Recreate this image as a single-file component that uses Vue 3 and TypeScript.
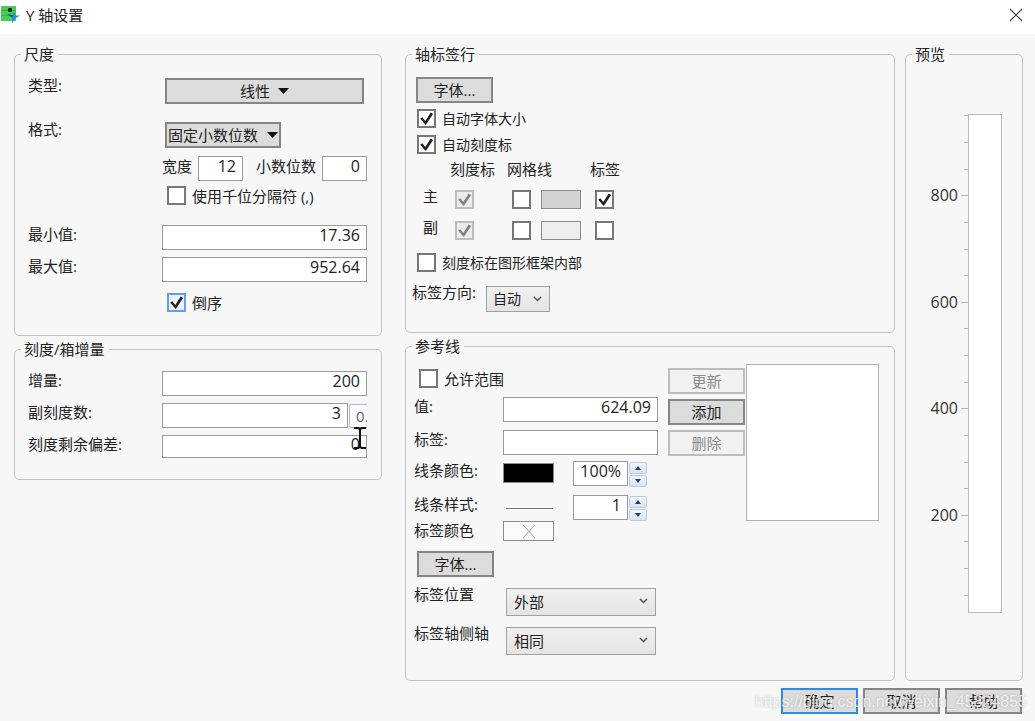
<script setup lang="ts">
import { computed, reactive } from 'vue'

const form = reactive({
  width: '12',
  decimals: '0',
  thousands: false,
  min: '17.36',
  max: '952.64',
  reversed: true,
  increment: '200',
  minorCount: '3',
  minorOffset: '0.',
  tickDeviation: '0',
  autoFont: true,
  autoTicks: true,
  insideTicks: false,
  direction: '自动',
  allowRange: false,
  refValue: '624.09',
  refLabel: '',
  opacity: '100%',
  lineWidth: '1',
  labelPosition: '外部',
  labelSide: '相同',
})

const tickRows = reactive([
  { name: '主', ticks: true, grid: false, swatch: 'swatch-major', label: true },
  { name: '副', ticks: true, grid: false, swatch: 'swatch-minor', label: false },
])

const barTop = 2
const barHeight = 498

const axisTicks = computed(() => {
  const min = Number(form.min)
  const max = Number(form.max)
  const list: { value: number; y: number; major: boolean }[] = []
  for (let value = 50; value < max; value += 50) {
    const y = Math.round(barTop + ((max - value) / (max - min)) * barHeight)
    list.push({ value, y, major: value % 200 === 0 })
  }
  return list
})
</script>

<template>
  <div class="dialog">
    <header class="titlebar">
      <svg class="app-icon" width="20" height="20" viewBox="0 0 20 20" aria-hidden="true">
        <rect x="1" y="1" width="15" height="15" fill="#45cf52" />
        <path d="M1 5.5h15M1 10.5h15" stroke="#35b548" stroke-width="1" />
        <circle cx="10" cy="5" r="2.200" fill="#10240f" />
        <path d="M7 9l5 1 2.500-3 1 3.500 4.500 0-5 3-3 5 0-6z" fill="#2491d0" />
        <path d="M7 9l6 1.500-1 2z" fill="#164a70" />
      </svg>
      <h1 class="title">Y 轴设置</h1>
      <button class="close" type="button" aria-label="关闭">
        <svg width="14" height="14" viewBox="0 0 14 14" aria-hidden="true">
          <path d="M1 1L13 13M13 1L1 13" stroke="#444" stroke-width="1.2" />
        </svg>
      </button>
    </header>

    <main class="columns">
      <div class="col col-left">
        <fieldset class="group">
          <legend>尺度</legend>
          <div class="fields scale">
            <div class="row button-row">
              <span class="name">类型:</span>
              <button class="btn menu-btn wide" type="button">
                线性
                <svg width="11" height="6" viewBox="0 0 11 6" aria-hidden="true"><path d="M0 0h11L5.500 6z" /></svg>
              </button>
            </div>
            <div class="row button-row format-row">
              <span class="name">格式:</span>
              <button class="btn menu-btn snug" type="button">
                固定小数位数
                <svg width="11" height="6" viewBox="0 0 11 6" aria-hidden="true"><path d="M0 0h11L5.500 6z" /></svg>
              </button>
            </div>
            <div class="digits">
              <label for="width">宽度</label>
              <input id="width" v-model="form.width" class="text" type="text" />
              <label for="decimals" class="second">小数位数</label>
              <input id="decimals" v-model="form.decimals" class="text" type="text" />
            </div>
            <label class="check indented thousands">
              <input v-model="form.thousands" type="checkbox" />使用千位分隔符 (,)
            </label>
            <div class="row min-row">
              <label class="name" for="min">最小值:</label>
              <input id="min" v-model="form.min" class="text" type="text" />
            </div>
            <div class="row max-row">
              <label class="name" for="max">最大值:</label>
              <input id="max" v-model="form.max" class="text" type="text" />
            </div>
            <label class="check indented reversed">
              <input v-model="form.reversed" class="active" type="checkbox" />倒序
            </label>
          </div>
        </fieldset>

        <fieldset class="group">
          <legend>刻度/箱增量</legend>
          <div class="fields increments">
            <div class="row">
              <label class="name" for="increment">增量:</label>
              <input id="increment" v-model="form.increment" class="text" type="text" />
            </div>
            <div class="row">
              <label class="name" for="minor-count">副刻度数:</label>
              <div class="pair">
                <input id="minor-count" v-model="form.minorCount" class="text" type="text" />
                <input v-model="form.minorOffset" class="stub" type="text" aria-label="副刻度偏移" />
              </div>
            </div>
            <div class="row">
              <label class="name" for="deviation">刻度剩余偏差:</label>
              <div class="deviation">
                <input id="deviation" v-model="form.tickDeviation" class="text short" type="text" />
                <svg class="caret" width="14" height="22" viewBox="0 0 14 22" aria-hidden="true">
                  <path d="M1 1h4.500L7 2.500L8.500 1H13M7 2v18M1 21h4.500L7 19.500L8.500 21H13" fill="none" stroke="#111" stroke-width="2" />
                </svg>
              </div>
            </div>
          </div>
        </fieldset>
      </div>

      <div class="col col-mid">
        <fieldset class="group">
          <legend>轴标签行</legend>
          <div class="axis">
            <button class="btn std font-btn" type="button">字体...</button>
            <label class="check small"><input v-model="form.autoFont" type="checkbox" />自动字体大小</label>
            <label class="check small"><input v-model="form.autoTicks" type="checkbox" />自动刻度标</label>
            <table class="ticks">
              <thead>
                <tr>
                  <td class="c-name"></td>
                  <th class="c-tick" scope="col">刻度标</th>
                  <th class="c-grid" scope="col">网格线</th>
                  <th class="c-label" scope="col">标签</th>
                </tr>
              </thead>
              <tbody>
                <tr v-for="row in tickRows" :key="row.name">
                  <th class="row-name" scope="row">{{ row.name }}</th>
                  <td><input v-model="row.ticks" type="checkbox" disabled :aria-label="row.name + '刻度标'" /></td>
                  <td>
                    <div class="grid-cell">
                      <input v-model="row.grid" type="checkbox" :aria-label="row.name + '网格线'" />
                      <button class="swatch" :class="row.swatch" type="button" :aria-label="row.name + '网格线颜色'"></button>
                    </div>
                  </td>
                  <td><input v-model="row.label" type="checkbox" :aria-label="row.name + '标签'" /></td>
                </tr>
              </tbody>
            </table>
            <label class="check small inside"><input v-model="form.insideTicks" type="checkbox" />刻度标在图形框架内部</label>
            <div class="direction">
              <label class="name" for="direction">标签方向:</label>
              <span class="select small-select">
                <select id="direction" v-model="form.direction">
                  <option>自动</option>
                </select>
                <svg width="9" height="6" viewBox="0 0 9 6" aria-hidden="true"><path d="M1 1l3.500 3.500L8 1" /></svg>
              </span>
            </div>
          </div>
        </fieldset>

        <fieldset class="group">
          <legend>参考线</legend>
          <div class="reference">
            <div class="ref-form">
              <label class="check allow"><input v-model="form.allowRange" type="checkbox" />允许范围</label>
              <div class="ref-row gap-xl">
                <label class="name" for="ref-value">值:</label>
                <input id="ref-value" v-model="form.refValue" class="text" type="text" />
              </div>
              <div class="ref-row gap-l">
                <label class="name" for="ref-label">标签:</label>
                <input id="ref-label" v-model="form.refLabel" class="text" type="text" />
              </div>
              <div class="ref-row gap-m">
                <label class="name" for="opacity">线条颜色:</label>
                <div class="line-cell">
                  <button class="swatch big black" type="button" aria-label="线条颜色"></button>
                  <input id="opacity" v-model="form.opacity" class="text number" type="text" />
                  <span class="spin">
                    <button type="button" aria-label="增加不透明度"><svg width="6" height="4" viewBox="0 0 6 4"><path d="M0 4h6L3 0z" /></svg></button>
                    <button type="button" aria-label="减少不透明度"><svg width="6" height="4" viewBox="0 0 6 4"><path d="M0 0h6L3 4z" /></svg></button>
                  </span>
                </div>
              </div>
              <div class="ref-row gap-l">
                <label class="name" for="line-width">线条样式:</label>
                <div class="line-cell">
                  <button class="line-style" type="button" aria-label="线条样式"></button>
                  <input id="line-width" v-model="form.lineWidth" class="text number" type="text" />
                  <span class="spin">
                    <button type="button" aria-label="增加线宽"><svg width="6" height="4" viewBox="0 0 6 4"><path d="M0 4h6L3 0z" /></svg></button>
                    <button type="button" aria-label="减少线宽"><svg width="6" height="4" viewBox="0 0 6 4"><path d="M0 0h6L3 4z" /></svg></button>
                  </span>
                </div>
              </div>
              <div class="ref-row">
                <span class="name">标签颜色</span>
                <button class="swatch big none" type="button" aria-label="标签颜色">
                  <svg width="14" height="13" viewBox="0 0 14 13" aria-hidden="true"><path d="M1 0L13 13M13 0L1 13" stroke="#aaa" /></svg>
                </button>
              </div>
              <button class="btn std ref-font" type="button">字体...</button>
              <div class="ref-row gap-l select-row">
                <label class="name" for="label-position">标签位置</label>
                <span class="select">
                  <select id="label-position" v-model="form.labelPosition">
                    <option>外部</option>
                  </select>
                  <svg width="9" height="6" viewBox="0 0 9 6" aria-hidden="true"><path d="M1 1l3.500 3.500L8 1" /></svg>
                </span>
              </div>
              <div class="ref-row gap-l select-row">
                <label class="name" for="label-side">标签轴侧轴</label>
                <span class="select">
                  <select id="label-side" v-model="form.labelSide">
                    <option>相同</option>
                  </select>
                  <svg width="9" height="6" viewBox="0 0 9 6" aria-hidden="true"><path d="M1 1l3.500 3.500L8 1" /></svg>
                </span>
              </div>
            </div>
            <div class="ref-actions">
              <button class="btn std" type="button" disabled>更新</button>
              <button class="btn std" type="button">添加</button>
              <button class="btn std" type="button" disabled>删除</button>
            </div>
            <div class="ref-list" role="listbox" aria-label="参考线"></div>
          </div>
        </fieldset>
      </div>

      <div class="col col-preview">
        <fieldset class="group fill">
          <legend>预览</legend>
          <svg class="preview" width="78" height="504" viewBox="0 0 78 504">
            <rect x="41.500" :y="barTop + 0.5" width="33" :height="barHeight" fill="#fff" stroke="#bbb" />
            <g v-for="tick in axisTicks" :key="tick.value">
              <path :d="`M${tick.major ? 34 : 37} ${tick.y + 0.5}H41`" stroke="#b4b4b4" />
              <text v-if="tick.major" x="31" :y="tick.y + 6" text-anchor="end">{{ tick.value }}</text>
            </g>
          </svg>
        </fieldset>
      </div>
    </main>

    <footer class="footer">
      <button class="btn std primary" type="button">确定</button>
      <button class="btn std" type="button">取消</button>
      <button class="btn std" type="button">帮助</button>
      <span class="watermark">https://blog.csdn.net/weixin_45824855</span>
    </footer>
  </div>
</template>

<style>
body {
  background: #f7f7f7;
}
</style>

<style scoped>
.dialog,
.dialog * {
  box-sizing: border-box;
}

.dialog {
  min-height: 100vh;
  background: #f7f7f7;
  color: #222;
  font-family: 'Open Sans', 'Noto Sans CJK SC', sans-serif;
  font-size: 15px;
  line-height: 20px;
}

button,
input,
select {
  margin: 0;
  color: inherit;
  font: inherit;
}

.titlebar {
  display: flex;
  align-items: center;
  height: 34px;
  padding: 0 12px 4px 0;
  background: #fff;
}

.app-icon {
  flex: none;
}

.title {
  flex: 1;
  margin: 0 0 0 6px;
  font-size: 15px;
  font-weight: 400;
}

.close {
  display: flex;
  padding: 0;
  border: 0;
  background: none;
}

.columns {
  display: flex;
  padding: 10px 12px 0 14px;
}

.col {
  display: flex;
  flex-direction: column;
  gap: 3px;
  min-width: 0;
}

.col-left {
  flex: 368 1 0;
}

.col-mid {
  flex: 490 1 0;
  margin-left: 23px;
}

.col-preview {
  flex: 118 1 0;
  margin-left: 10px;
}

.group {
  min-width: 0;
  margin: 0;
  padding: 0 6px;
  border: 1px solid #c2c2c2;
  border-radius: 5px;
}

.group legend {
  padding: 0 4px 0 3px;
}

.fill {
  flex: 1;
}

.fields {
  padding: 12px 8px 23px 7px;
}

.name {
  line-height: 18px;
}

.row {
  display: grid;
  grid-template-columns: 134px 1fr;
  align-items: start;
}

.button-row .btn {
  margin: 2px 0 0 3px;
}

.btn {
  display: flex;
  align-items: center;
  justify-content: center;
  height: 26px;
  padding: 0;
  border: 2px solid #858585;
  background: #dcdcdc;
  white-space: nowrap;
}

.btn:disabled {
  border-color: #bdbdbd;
  background: #f2f2f2;
  color: #8c8c8c;
}

.std {
  width: 77px;
}

.primary {
  border-color: #2f8be0;
}

.menu-btn {
  gap: 8px;
}

.menu-btn svg {
  fill: #111;
}

.button-row .wide {
  margin-right: 3px;
}

.snug {
  gap: 9px;
  width: 116px;
}

.format-row {
  margin-top: 16px;
}

.text {
  width: 100%;
  min-width: 0;
  height: 25px;
  padding: 0 6px 5px;
  border: 1px solid #9a9a9a;
  border-radius: 0;
  background: #fff;
  font-size: 16px;
  text-align: right;
}

.digits {
  display: flex;
  align-items: flex-start;
  margin: 8px 0 0 134px;
}

.digits .text {
  flex: none;
  width: 45px;
}

.digits label {
  flex: none;
  width: 36px;
}

.digits .second {
  width: 66px;
  margin-left: 13px;
}

.digits .second + .text {
  margin-left: auto;
}

.check {
  display: flex;
  align-items: center;
  gap: 6px;
  width: max-content;
  height: 19px;
  line-height: 18px;
}

.indented {
  margin-left: 139px;
}

.thousands {
  margin-top: 5px;
}

.min-row {
  margin-top: 20px;
}

.max-row {
  margin-top: 7px;
}

.reversed {
  margin-top: 11px;
}

input[type='checkbox'] {
  display: block;
  flex: none;
  width: 19px;
  height: 19px;
  border: 2px solid #777;
  background: #fff;
  appearance: none;
}

input[type='checkbox']:checked::before {
  content: '';
  display: block;
  width: 15px;
  height: 15px;
  background: #222;
  clip-path: polygon(8% 52%, 22% 42%, 42% 66%, 78% 10%, 94% 20%, 45% 94%);
}

input[type='checkbox']:disabled {
  border-color: #bdbdbd;
  background: #ebebeb;
}

input[type='checkbox']:disabled::before {
  background: #808080;
}

input[type='checkbox'].active {
  border-color: #6a9bea;
  background: #eaf3ff;
}

.increments {
  display: grid;
  gap: 7px;
  padding-bottom: 21px;
}

.pair {
  display: flex;
  gap: 1px;
  overflow: hidden;
}

.stub {
  flex: none;
  align-self: flex-end;
  width: 18px;
  height: 24px;
  padding: 0 0 0 6px;
  border: 1px solid #a9bad3;
  border-right: 0;
  border-radius: 2px 0 0 2px;
  background: #fafcff;
  color: #666;
}

.deviation {
  position: relative;
}

.short {
  display: block;
  height: 23px;
}

.caret {
  position: absolute;
  right: 0;
  bottom: 9px;
}

.axis {
  padding: 13px 0 20px;
}

.font-btn {
  margin-left: 4px;
}

.small {
  margin: 7px 0 0 5px;
  font-size: 14px;
}

.font-btn + .small {
  margin-top: 6px;
}

.ticks {
  margin-top: 6px;
  border-collapse: collapse;
  table-layout: fixed;
}

.ticks th,
.ticks td {
  padding: 0;
  font-weight: 400;
  text-align: left;
  vertical-align: top;
}

.ticks thead th {
  height: 27px;
  line-height: 18px;
}

.ticks tbody td {
  height: 31px;
  padding: 3px 0 0 5px;
}

.ticks .row-name {
  padding-left: 11px;
  line-height: 18px;
}

.c-name {
  width: 38px;
}

.c-tick {
  width: 57px;
}

.c-grid {
  width: 83px;
}

.c-label {
  width: 40px;
}

.grid-cell {
  display: flex;
  gap: 10px;
}

.swatch {
  width: 40px;
  height: 20px;
  padding: 0;
  border: 1px solid #8c8c8c;
}

.grid-cell .swatch {
  height: 19px;
}

.swatch-major {
  background: #d3d3d3;
}

.swatch-minor {
  background: #eee;
}

.inside {
  margin-top: 4px;
}

.direction {
  display: flex;
  align-items: flex-start;
  justify-content: space-between;
  width: 138px;
  margin-top: 11px;
}

.direction .select {
  margin-top: 3px;
}

.select {
  position: relative;
  display: block;
}

.select select {
  display: block;
  width: 100%;
  height: 28px;
  padding: 0 20px 0 7px;
  border: 1px solid #a0a0a0;
  border-radius: 0;
  background: linear-gradient(#f0f0f0, #e4e4e4);
  appearance: none;
}

.select svg {
  position: absolute;
  top: 10px;
  right: 8px;
  fill: none;
  stroke: #555;
  stroke-width: 1.5;
  pointer-events: none;
}

.small-select {
  width: 64px;
}

.small-select select {
  height: 26px;
  padding: 0 0 0 6px;
  font-size: 14px;
}

.reference {
  display: flex;
  align-items: flex-start;
  padding: 8px 9px 25px 2px;
}

.ref-form {
  flex: 1;
  min-width: 0;
  padding-top: 5px;
}

.allow {
  margin-left: 5px;
}

.ref-row {
  display: grid;
  grid-template-columns: 89px 1fr;
  align-items: start;
}

.gap-xl {
  margin-top: 9px;
}

.gap-l {
  margin-top: 8px;
}

.gap-m {
  margin-top: 6px;
}

.line-cell {
  display: flex;
  align-items: flex-start;
}

.big {
  width: 51px;
  margin-right: 19px;
}

.line-cell .big {
  margin-top: 2px;
}

.black {
  background: #000;
}

.none {
  display: flex;
  align-items: center;
  justify-content: center;
  background: #fafafa;
}

.line-cell .number {
  flex: none;
  width: 55px;
}

.line-style {
  width: 47px;
  height: 14px;
  margin: 0 20px 0 3px;
  padding: 0;
  border: 0;
  border-bottom: 1px solid #777;
  background: none;
}

.spin {
  display: grid;
  gap: 1px;
  margin: 1px 0 0 1px;
}

.spin button {
  display: flex;
  align-items: center;
  justify-content: center;
  width: 18px;
  height: 12px;
  padding: 0;
  border: 1px solid #b9cbe4;
  border-radius: 2px;
  background: linear-gradient(#f2f7fe, #d5e3f5);
}

.spin svg {
  fill: #2c3e5c;
}

.ref-font {
  margin: 10px 0 0 3px;
}

.select-row .select {
  margin: 3px 2px 0 3px;
}

.ref-actions {
  display: grid;
  gap: 5px;
  margin: 4px 1px 0 10px;
}

.ref-list {
  flex: none;
  width: 133px;
  height: 157px;
  border: 1px solid #b0b0b0;
  background: #fff;
}

.preview {
  display: block;
  margin: 48px 0 0 15px;
}

.preview text {
  fill: #333;
  font-size: 16px;
}

.footer {
  position: relative;
  display: flex;
  justify-content: flex-end;
  gap: 5px;
  padding: 7px 13px 7px 0;
}

.watermark {
  position: absolute;
  right: 8px;
  bottom: 9px;
  color: rgba(255, 255, 255, 0.8);
  font-family: 'Liberation Sans', sans-serif;
  font-size: 16px;
  text-shadow: 0 0 2px rgba(120, 120, 120, 0.5);
  pointer-events: none;
}
</style>
